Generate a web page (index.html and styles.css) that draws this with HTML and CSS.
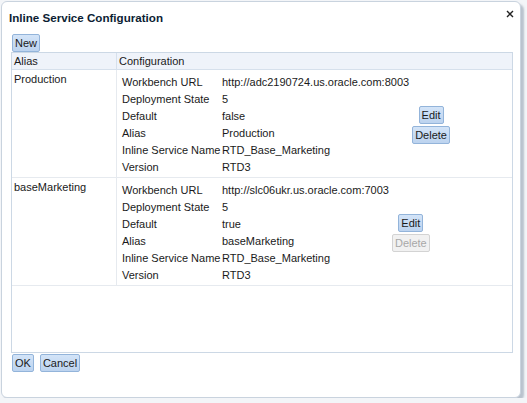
FILE: index.html
```html
<!DOCTYPE html>
<html lang="en">
<head>
    <meta charset="UTF-8">
    <title>Inline Service Configuration</title>
    <link rel="stylesheet" href="styles.css">
</head>
<body>
    <div class="dialog">
        <div class="title-bar">
            <span class="title">Inline Service Configuration</span>
            <svg class="close" width="8" height="8" viewBox="0 0 8 8">
                <path d="M1 1 L7 7 M7 1 L1 7" stroke="#222" stroke-width="1.4"/>
            </svg>
        </div>

        <div class="toolbar">
            <button class="btn">New</button>
        </div>

        <div class="grid">
            <table class="services">
                <thead>
                    <tr>
                        <th class="col-alias">Alias</th>
                        <th>Configuration</th>
                    </tr>
                </thead>
                <tbody>
                    <tr>
                        <td class="col-alias">Production</td>
                        <td class="config">
                            <table class="props">
                                <tr><td class="label">Workbench URL</td><td class="value">http://adc2190724.us.oracle.com:8003</td>
                                    <td class="actions" rowspan="6">
                                        <button class="btn">Edit</button>
                                        <button class="btn">Delete</button>
                                    </td></tr>
                                <tr><td class="label">Deployment State</td><td class="value">5</td></tr>
                                <tr><td class="label">Default</td><td class="value">false</td></tr>
                                <tr><td class="label">Alias</td><td class="value">Production</td></tr>
                                <tr><td class="label">Inline Service Name</td><td class="value">RTD_Base_Marketing</td></tr>
                                <tr><td class="label">Version</td><td class="value">RTD3</td></tr>
                            </table>
                        </td>
                    </tr>
                    <tr>
                        <td class="col-alias">baseMarketing</td>
                        <td class="config">
                            <table class="props">
                                <tr><td class="label">Workbench URL</td><td class="value">http://slc06ukr.us.oracle.com:7003</td>
                                    <td class="actions" rowspan="6">
                                        <button class="btn">Edit</button>
                                        <button class="btn" disabled>Delete</button>
                                    </td></tr>
                                <tr><td class="label">Deployment State</td><td class="value">5</td></tr>
                                <tr><td class="label">Default</td><td class="value">true</td></tr>
                                <tr><td class="label">Alias</td><td class="value">baseMarketing</td></tr>
                                <tr><td class="label">Inline Service Name</td><td class="value">RTD_Base_Marketing</td></tr>
                                <tr><td class="label">Version</td><td class="value">RTD3</td></tr>
                            </table>
                        </td>
                    </tr>
                </tbody>
            </table>
        </div>

        <div class="footer">
            <button class="btn">OK</button>
            <button class="btn">Cancel</button>
        </div>
    </div>
</body>
</html>
```

FILE: styles.css
```css
body {
    margin: 0;
    background-color: #f3f5f8;
    font-family: Tahoma, "Liberation Sans", Arial, sans-serif;
    font-size: 11px;
    color: #1a1a1a;
}

.dialog {
    box-sizing: border-box;
    width: 520px;
    height: 397px;
    margin: 1px 0 0 1px;
    padding: 0 7px 0 9px;
    background-color: #fff;
    border: 1px solid #c9d3de;
    border-radius: 6px;
    box-shadow: 3px 3px 2px rgba(160, 172, 186, 0.7);
}

.title-bar {
    display: flex;
    justify-content: space-between;
    align-items: center;
    height: 30px;
    margin-left: -2px;
}

.title {
    font-weight: bold;
    font-size: 11.6px;
    color: #0c1d33;
}

.close {
    margin: -6px -1px 0 0;
}

.toolbar {
    padding: 2px 0 0 1px;
    height: 18px;
}

.btn {
    font-family: inherit;
    font-size: 11px;
    color: #1a1a1a;
    height: 18px;
    padding: 0 2px;
    margin: 0;
    border: 1px solid #93b4da;
    border-radius: 2px;
    background: linear-gradient(#d3e4f8, #bcd3ef);
    cursor: pointer;
}

.btn:disabled {
    color: #a8a8a8;
    border-color: #d3d3d3;
    background: #f1f1f1;
    cursor: default;
}

.grid {
    box-sizing: border-box;
    height: 301px;
    border: 1px solid #ccd8e5;
}

.services {
    width: 100%;
    border-collapse: collapse;
}

.services th {
    text-align: left;
    font-weight: normal;
    height: 16px;
    padding: 0 2px;
    background-color: #eff3fa;
    border-bottom: 1px solid #d6e0ec;
}

.services th + th {
    border-left: 1px solid #d6e0ec;
}

.col-alias {
    width: 100px;
}

.services > tbody > tr > td {
    vertical-align: top;
    border-bottom: 1px solid #e6eaef;
}

.services > tbody > tr > td.col-alias {
    padding: 3px 2px;
    border-right: 1px solid #e6eaef;
}

.services > tbody > tr > td.config {
    padding: 3px 0 2px 5px;
}

.props {
    border-collapse: collapse;
}

.props td {
    height: 17px;
    padding: 0;
    white-space: nowrap;
}

.props .label {
    width: 100px;
}

.props .actions {
    text-align: center;
    vertical-align: middle;
    padding: 0 3px;
}

.props .actions .btn {
    display: block;
    margin: 2px auto 0;
}

.footer {
    display: flex;
    gap: 6px;
    padding: 1px 0 0 1px;
}
```
